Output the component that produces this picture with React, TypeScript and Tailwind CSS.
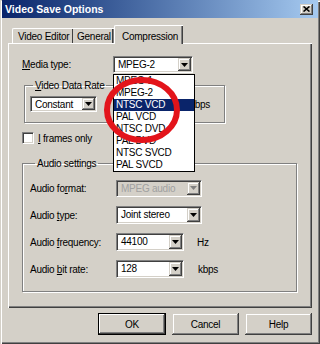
import React from "react";

const sunken =
  "border border-t-[#808080] border-l-[#808080] border-b-white border-r-white shadow-[inset_1px_1px_0_#404040,inset_-1px_-1px_0_#d4d0c8]";
const raised =
  "bg-[#d4d0c8] shadow-[inset_-1px_-1px_0_#404040,inset_1px_1px_0_#d4d0c8,inset_-2px_-2px_0_#808080,inset_2px_2px_0_#ffffff]";
const etched = "border border-[#808080] shadow-[inset_1px_1px_0_#ffffff,1px_1px_0_#ffffff]";

function Arrow({ disabled }: { disabled?: boolean }) {
  return (
    <svg width="7" height="4" viewBox="0 0 7 4">
      <polygon points="0,0 7,0 3.5,4" fill={disabled ? "#808080" : "#000"} />
    </svg>
  );
}

function Combo({ value, className, disabled }: { value: string; className: string; disabled?: boolean }) {
  return (
    <div className={`flex ${sunken} ${disabled ? "bg-[#d4d0c8]" : "bg-white"} ${className}`}>
      <span className={`flex-1 pl-[4px] pt-[2px] leading-[12px] ${disabled ? "text-[#a0a0a0]" : "text-black"}`}>{value}</span>
      <div className={`m-[1px] w-[13px] flex items-center justify-center ${raised}`}>
        <Arrow disabled={disabled} />
      </div>
    </div>
  );
}

function U({ children }: { children: React.ReactNode }) {
  return <span className="underline underline-offset-1">{children}</span>;
}

function AudioRow({ label, children }: { label: React.ReactNode; children: React.ReactNode }) {
  return (
    <div className="flex items-center h-[18px]">
      <span className="w-[86px] shrink-0">{label}</span>
      {children}
    </div>
  );
}

const mediaTypes = ["MPEG-1", "MPEG-2", "NTSC VCD", "PAL VCD", "NTSC DVD", "PAL DVD", "NTSC SVCD", "PAL SVCD"];

export default function App() {
  return (
    <div className="relative w-[320px] h-[344px] overflow-hidden bg-[#d4d0c8] text-black text-[10px] tracking-[-0.25px] font-['Liberation_Sans',Arial,sans-serif] shadow-[inset_1px_1px_0_#d4d0c8,inset_2px_2px_0_#ffffff,inset_-1px_-1px_0_#404040,inset_-2px_-2px_0_#808080]">
      {/* Title bar */}
      <div className="mx-[2px] h-[18px] flex items-center justify-between pl-[3px] pr-[5px] bg-gradient-to-r from-[#0a246a] to-[#a6caf0]">
        <span className="text-white font-bold text-[10.5px] tracking-normal leading-[12px]">Video Save Options</span>
        <div className={`w-[13px] h-[11px] flex items-center justify-center ${raised}`}>
          <svg width="7" height="6" viewBox="0 0 7 6">
            <path d="M0.5 0.5 L6.5 5.5 M6.5 0.5 L0.5 5.5" stroke="#000" strokeWidth="1.6" />
          </svg>
        </div>
      </div>

      {/* Tabs */}
      <div className="mt-[7px] ml-[12px] h-[18px] flex items-end">
        <div className="h-[15px] w-[61px] pl-[5px] flex items-center border-t border-l border-white rounded-tl-[2px] shadow-[inset_-1px_0_0_#404040]">
          Video Editor
        </div>
        <div className="h-[15px] w-[41px] pl-[4px] flex items-center border-t border-white shadow-[inset_-1px_0_0_#808080,inset_-2px_0_0_#404040]">
          General
        </div>
        <div className="relative z-10 h-[19px] -mb-[1px] w-[69px] pl-[7px] flex items-start bg-[#d4d0c8] border-t border-l border-white rounded-tl-[2px] shadow-[inset_-1px_0_0_#404040,inset_-2px_0_0_#808080]">
          <span className="mt-[3px]">Compression</span>
        </div>
      </div>

      {/* Panel */}
      <div className="mx-[8px] w-[304px] h-[265px] border-t border-l border-white shadow-[inset_-1px_-1px_0_#404040,inset_-2px_-2px_0_#808080] pl-[13px] pt-[12px]">
        <div className="flex items-center h-[17px]">
          <span className="w-[91px] shrink-0">
            <U>M</U>edia type:
          </span>
          <Combo value="MPEG-2" className="w-[80px] h-[17px]" />
        </div>

        <fieldset className={`ml-[2px] mt-[7px] w-[201px] h-[43px] pl-[5px] ${etched}`}>
          <legend className="ml-[3px] px-[2px] leading-[11px]">
            <U>V</U>ideo Data Rate
          </legend>
          <div className="flex items-center mt-[5px]">
            <Combo value="Constant" className="w-[67px] h-[16px]" />
            <div className={`ml-[20px] w-[56px] h-[16px] bg-white ${sunken}`} />
            <span className="ml-[17px]">kbps</span>
          </div>
        </fieldset>

        <label className="mt-[9px] flex items-center gap-[4px] h-[12px]">
          <span className={`w-[12px] h-[12px] bg-white ${sunken}`} />
          <span>
            <U>I</U> frames only
          </span>
        </label>

        <fieldset className={`mt-[14px] w-[275px] h-[134px] pl-[7px] pt-[10px] ${etched}`}>
          <legend className="ml-[5px] px-[2px] leading-[11px]">Audio settings</legend>
          <div className="flex flex-col gap-[9px]">
            <AudioRow
              label={
                <>
                  Audio fo<U>r</U>mat:
                </>
              }
            >
              <Combo value="MPEG audio" className="w-[86px] h-[17px]" disabled />
            </AudioRow>
            <AudioRow
              label={
                <>
                  Audio <U>t</U>ype:
                </>
              }
            >
              <Combo value="Joint stereo" className="w-[86px] h-[18px]" />
            </AudioRow>
            <AudioRow
              label={
                <>
                  Audio <U>f</U>requency:
                </>
              }
            >
              <Combo value="44100" className="w-[68px] h-[18px]" />
              <span className="ml-[13px]">Hz</span>
            </AudioRow>
            <AudioRow
              label={
                <>
                  Audio <U>b</U>it rate:
                </>
              }
            >
              <Combo value="128" className="w-[68px] h-[18px]" />
              <span className="ml-[14px]">kbps</span>
            </AudioRow>
          </div>
        </fieldset>
      </div>

      {/* Buttons */}
      <div className="mt-[5px] pr-[8px] flex justify-end gap-[6px]">
        <button className="w-[68px] h-[22px] border border-black bg-[#d4d0c8] shadow-[inset_-1px_-1px_0_#404040,inset_1px_1px_0_#ffffff,inset_-2px_-2px_0_#808080]">
          OK
        </button>
        <button className={`w-[67px] h-[22px] ${raised}`}>Cancel</button>
        <button className={`w-[67px] h-[22px] ${raised}`}>Help</button>
      </div>

      {/* Open dropdown list */}
      <div className="absolute left-[113px] top-[74px] w-[82px] bg-white border border-black">
        {mediaTypes.map((m) => (
          <div
            key={m}
            className={`h-[12px] leading-[12px] pl-[2px] ${m === "NTSC VCD" ? "bg-[#0a246a] text-white" : "text-black"}`}
          >
            {m}
          </div>
        ))}
      </div>

      {/* Red annotation circle */}
      <svg className="absolute left-[103px] top-[76px]" width="78" height="68" viewBox="0 0 78 68">
        <ellipse cx="39" cy="34" rx="35" ry="30" fill="none" stroke="#e3141b" strokeWidth="6" />
      </svg>
    </div>
  );
}
